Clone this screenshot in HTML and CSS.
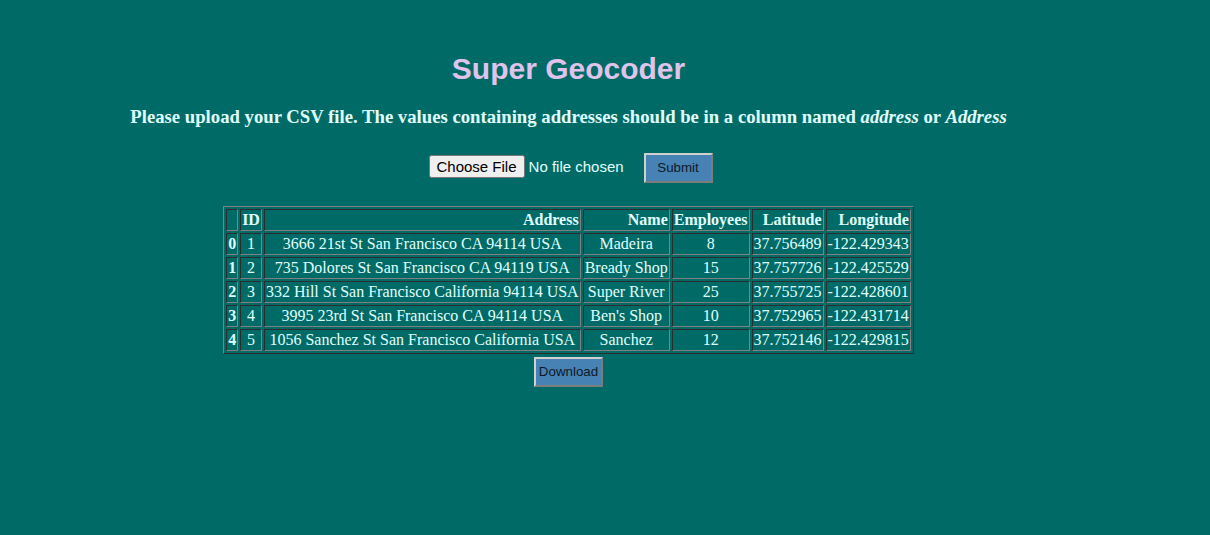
FILE: index.html
```html
<!DOCTYPE html>
<html>
<head>
<meta charset="utf-8">
<title>Super Geocoder</title>
<link rel="stylesheet" href="styles.css">
</head>
<body>
<div class="page">
  <h1 class="title">Super Geocoder</h1>
  <h3 class="lead">Please upload your CSV file. The values containing addresses should be in a column named <em>address</em> or <em>Address</em></h3>
  <form class="upload">
    <input class="file" type="file" name="file">
    <button class="btn" type="button">Submit</button>
  </form>
  <table class="dataframe">
    <thead>
      <tr class="head-row">
        <th></th>
        <th>ID</th>
        <th>Address</th>
        <th>Name</th>
        <th>Employees</th>
        <th>Latitude</th>
        <th>Longitude</th>
      </tr>
    </thead>
    <tbody>
      <tr><th>0</th><td>1</td><td>3666 21st St San Francisco CA 94114 USA</td><td>Madeira</td><td>8</td><td>37.756489</td><td>-122.429343</td></tr>
      <tr><th>1</th><td>2</td><td>735 Dolores St San Francisco CA 94119 USA</td><td>Bready Shop</td><td>15</td><td>37.757726</td><td>-122.425529</td></tr>
      <tr><th>2</th><td>3</td><td>332 Hill St San Francisco California 94114 USA</td><td>Super River</td><td>25</td><td>37.755725</td><td>-122.428601</td></tr>
      <tr><th>3</th><td>4</td><td>3995 23rd St San Francisco CA 94114 USA</td><td>Ben's Shop</td><td>10</td><td>37.752965</td><td>-122.431714</td></tr>
      <tr><th>4</th><td>5</td><td>1056 Sanchez St San Francisco California USA</td><td>Sanchez</td><td>12</td><td>37.752146</td><td>-122.429815</td></tr>
    </tbody>
  </table>
  <div class="download-row">
    <button class="btn" type="button">Download</button>
  </div>
</div>
</body>
</html>
```

FILE: styles.css
```css
html, body {
  margin: 0;
  padding: 0;
  background: #006b66;
}

.page {
  width: 1121px;
  margin-left: 8px;
  padding-top: 52px;
  text-align: center;
  font-family: "Liberation Serif", serif;
  color: #e0ffff;
}

.title {
  margin: 0;
  font-family: "Liberation Sans", Arial, sans-serif;
  font-size: 30px;
  line-height: 34px;
  font-weight: bold;
  color: #dfc3ea;
}

.lead {
  margin: 20px 0 0;
  font-size: 18.72px;
  line-height: 22px;
  font-weight: bold;
  color: #e0ffff;
}

.upload {
  margin-top: 25px;
  display: flex;
  justify-content: center;
  align-items: center;
  gap: 19px;
  height: 30px;
  padding-left: 4px;
}

.file {
  font-family: "Liberation Sans", Arial, sans-serif;
  font-size: 15px;
  color: #e0ffff;
  width: 196px;
  margin-bottom: 4px;
}

.btn {
  width: 69px;
  height: 30px;
  padding: 0 0 2px;
  background: #4682b4;
  border: 2px outset #d0d0d0;
  color: #101828;
  font-family: "Liberation Sans", Arial, sans-serif;
  font-size: 13.33px;
}

.dataframe {
  margin: 23px auto 0;
  border: 1px outset #808080;
  border-spacing: 2px;
  font-size: 16px;
  color: #e0ffff;
}

.dataframe th,
.dataframe td {
  border: 1px inset #808080;
  padding: 1px;
  line-height: 18px;
}

.head-row th {
  text-align: right;
}

.dataframe tbody td,
.dataframe tbody th {
  text-align: center;
}

.download-row {
  margin-top: 3px;
  display: flex;
  justify-content: center;
}
```
